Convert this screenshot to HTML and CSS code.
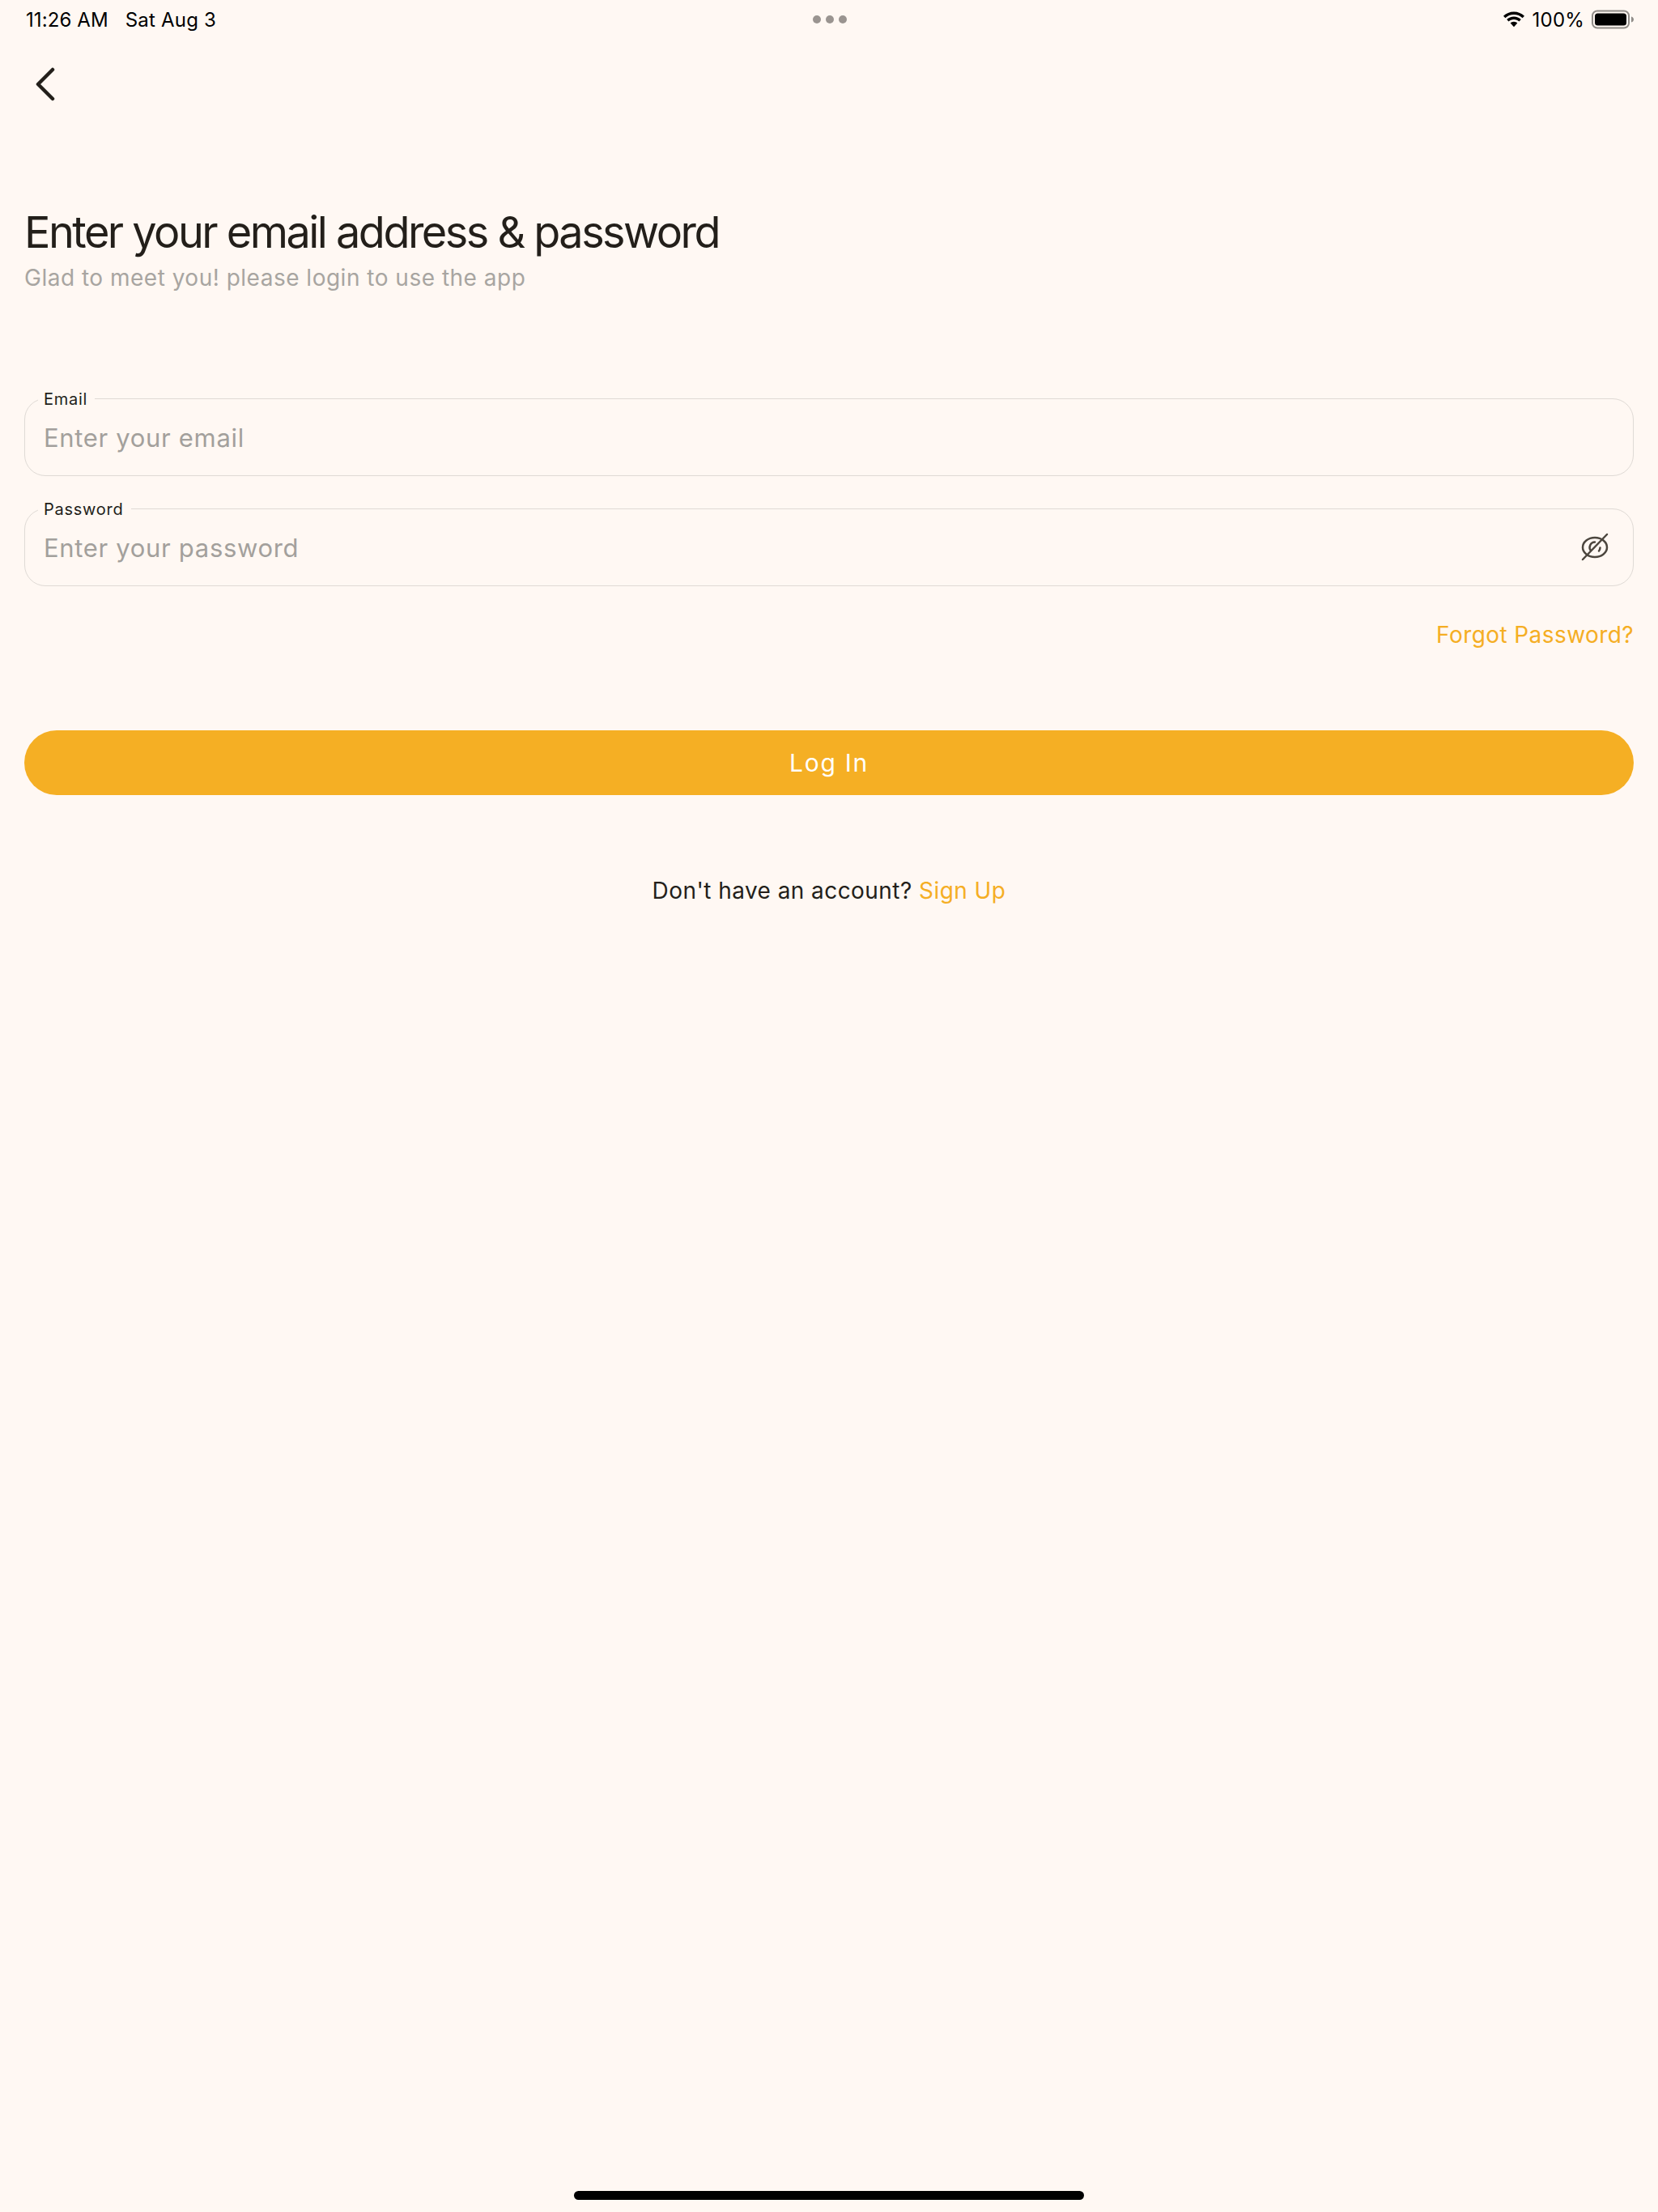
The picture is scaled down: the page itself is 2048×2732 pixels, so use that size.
FILE: index.html
```html
<!DOCTYPE html>
<html lang="en">
<head>
<meta charset="utf-8">
<title>Log In</title>
<link rel="stylesheet" href="styles.css">
</head>
<body>
<div class="screen">
  <header class="status">
    <div class="status-left"><span class="time">11:26 AM</span><span class="date">Sat Aug 3</span></div>
    <div class="dots"><i></i><i></i><i></i></div>
    <div class="status-right">
      <svg class="wifi" width="28" height="20" viewBox="0 0 28 20"><path fill="#000" d="M14 4c4.100 0 7.800 1.600 10.600 4.200L27 5.700C23.600 2.400 19 .4 14 .4S4.400 2.400 1 5.700l2.400 2.500C6.200 5.600 9.900 4 14 4z"/><path fill="#000" d="M14 10c2.500 0 4.800 1 6.500 2.500l2.300-2.400C20.500 7.900 17.400 6.600 14 6.600s-6.500 1.300-8.800 3.500l2.300 2.400C9.200 11 11.500 10 14 10z"/><path fill="#000" d="M14 12.800c-1.700 0-3.200.7-4.300 1.700l4.300 4.700 4.300-4.700c-1.100-1-2.600-1.700-4.300-1.700z"/></svg>
      <span class="pct">100%</span>
      <svg class="battery" width="52" height="24" viewBox="0 0 52 24"><rect x="1" y="1.500" width="45" height="21" rx="6" fill="none" stroke="#8f8b87" stroke-width="2"/><rect x="4" y="4.500" width="39" height="15" rx="3.500" fill="#000"/><path fill="#8f8b87" d="M49 8.500c2 .5 3 2 3 3.500s-1 3-3 3.500z"/></svg>
    </div>
  </header>

  <button class="back" type="button" aria-label="Back">
    <svg width="28" height="42" viewBox="0 0 28 42"><path d="M23 3 5 21l18 18" fill="none" stroke="#231f1a" stroke-width="4.500" stroke-linecap="round" stroke-linejoin="round"/></svg>
  </button>

  <main class="content">
    <h1 class="title">Enter your email address &amp; password</h1>
    <p class="subtitle">Glad to meet you! please login to use the app</p>

    <div class="field field-email">
      <span class="field-label">Email</span>
      <span class="placeholder">Enter your email</span>
    </div>
    <div class="field field-password">
      <span class="field-label">Password</span>
      <span class="placeholder">Enter your password</span>
      <svg class="eye" width="36" height="36" viewBox="0 0 36 36" fill="none" stroke="#4c463e" stroke-width="2.500" stroke-linecap="round"><ellipse cx="18" cy="18" rx="15" ry="12"/><path d="M18 11.500a6.500 6.500 0 0 0-5 10.500M23 22.500a6.500 6.500 0 0 0 1.500-4"/><path d="M33 2 3 33"/></svg>
    </div>

    <div class="forgot-row"><a class="link forgot">Forgot Password?</a></div>

    <button class="login" type="button">Log In</button>

    <p class="signup">Don't have an account? <a class="link">Sign Up</a></p>
  </main>

  <div class="home-bar"></div>
</div>
</body>
</html>
```
FILE: styles.css
```css
* { box-sizing: border-box; }
html, body { margin: 0; padding: 0; }
body { background: #fff8f3; font-family: Inter, "Liberation Sans", sans-serif; }
.screen { height: 2732px; display: flex; flex-direction: column; }

.status { height: 48px; padding: 0 30px 0 32px; display: grid; grid-template-columns: 1fr auto 1fr; align-items: center; color: #000; font-size: 24px; }
.status-left { display: flex; gap: 21px; }
.time { letter-spacing: 0.1px; }
.date { letter-spacing: 0.2px; }
.dots { display: flex; gap: 6px; }
.dots i { width: 10px; height: 10px; border-radius: 50%; background: #9a9490; display: block; }
.status-right { display: flex; justify-content: flex-end; align-items: center; gap: 9px; }
.wifi, .battery { display: block; }
.pct { letter-spacing: 0.2px; }

.back { align-self: flex-start; margin: 35px 0 0 42px; padding: 0; border: 0; background: none; display: block; height: 42px; }
.back svg { display: block; }

.content { padding: 0 30px; display: flex; flex-direction: column; }
.title { margin: 130px 0 0; font-size: 54px; line-height: 64px; font-weight: 400; color: #231f1a; letter-spacing: -2.53px; }
.subtitle { margin: 6px 0 0; font-size: 28px; line-height: 36px; color: #a8a5a1; letter-spacing: 0.5px; }

.field { height: 96px; border: 1.500px solid #dfdad5; border-radius: 26px; padding: 0 23px; display: flex; align-items: center; justify-content: space-between; position: relative; }
.field-email { margin-top: 131px; }
.field-password { margin-top: 40px; }
.field-label { position: absolute; top: -12px; left: 16px; padding: 0 9px 0 7px; background: #fff8f3; font-size: 20px; line-height: 24px; color: #231f1a; letter-spacing: 0.75px; }
.placeholder { font-size: 31px; color: #a3a09c; letter-spacing: 0.68px; }
.eye { display: block; margin-right: 6px; }

.forgot-row { display: flex; justify-content: flex-end; margin-top: 42px; }
.link { color: #f5ae24; }
.forgot { font-size: 28px; line-height: 36px; letter-spacing: 0.42px; }

.login { margin-top: 100px; height: 80px; border: 0; border-radius: 40px; background: #f5af24; color: #fff; font-family: inherit; font-size: 30px; letter-spacing: 1.7px; }
.signup { margin: 100px 0 0; text-align: center; font-size: 28px; line-height: 36px; color: #231f1a; letter-spacing: 0.44px; }

.home-bar { margin: auto auto 15px; width: 630px; height: 11px; border-radius: 6px; background: #000; }
```
